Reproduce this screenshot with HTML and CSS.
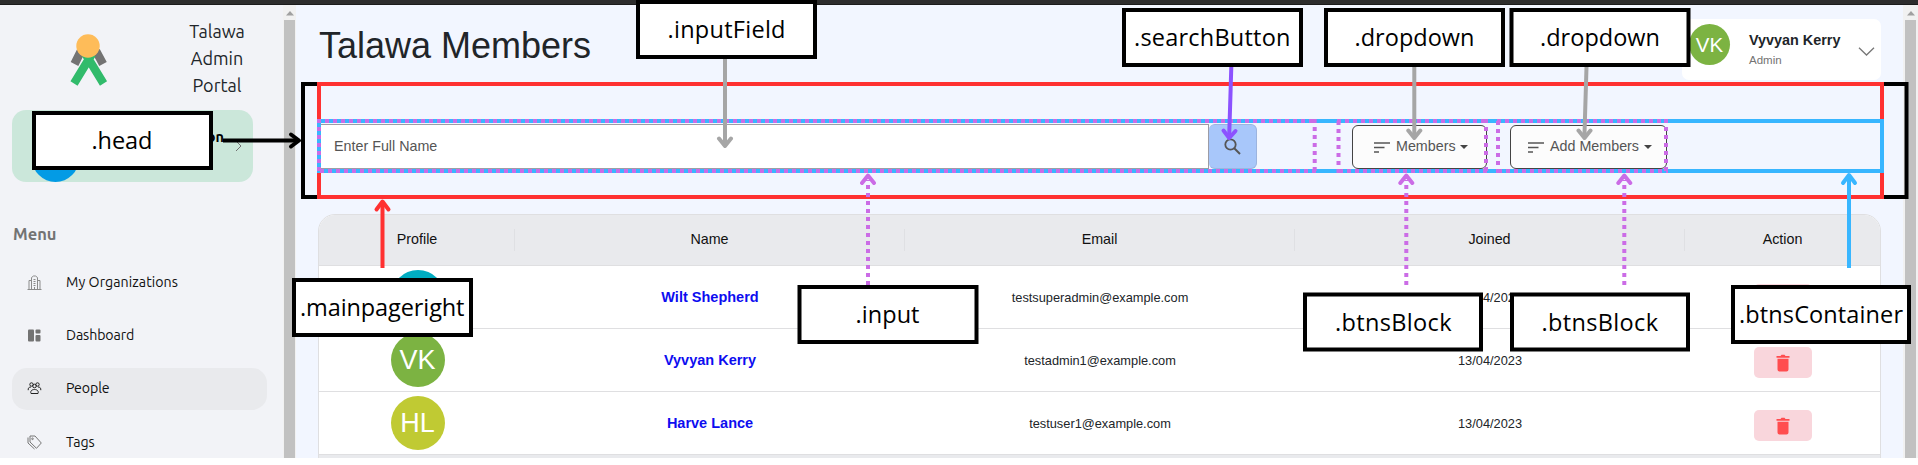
FILE: index.html
```html
<!DOCTYPE html>
<html lang="en">
<head>
<meta charset="utf-8">
<title>Talawa Members</title>
<link rel="stylesheet" href="styles.css">
</head>
<body>
<svg class="defs" width="0" height="0">
  <symbol id="sort" viewBox="0 0 18 12"><path d="M1 2h16M1 6.500h10.500M1 11h5" stroke="#555" stroke-width="1.700" fill="none"/></symbol>
  <symbol id="trash" viewBox="0 0 14 18"><path d="M.5 2h4L5.500.8h3L9.500 2h4v1.700H.5zM1.500 4.800h11V15.500a2 2 0 0 1-2 2h-7a2 2 0 0 1-2-2z" fill="#ff4d4f"/></symbol>
  <symbol id="scroll-up" viewBox="0 0 8 5"><path d="M0 4.500 4 0l4 4.500z" fill="#a0a0a0"/></symbol>
</svg>
<div class="topbar"></div>
<div class="app">
  <aside class="sidebar">
    <div class="brand">
      <svg class="logo" width="38" height="53" viewBox="0 0 38 53">
        <path d="M11 17 4.500 30M26 17l7 13" stroke="#737373" stroke-width="8.500"/>
        <path d="M4 49.500 22 20M33.500 49.500 15.500 20" stroke="#31bb6b" stroke-width="8.300"/>
        <circle cx="18" cy="12" r="11.700" fill="#febc59"/>
      </svg>
      <div class="brand-name">Talawa<br>Admin<br>Portal</div>
    </div>
    <div class="org">
      <span class="org-avatar"></span>
      <span class="org-name">on</span>
      <svg class="org-chevron" width="7" height="12" viewBox="0 0 7 12"><path d="m1 1 5 5-5 5" fill="none" stroke="#737373"/></svg>
    </div>
    <h5 class="menu-title">Menu</h5>
    <nav class="menu">
      <a class="item"><svg width="14" height="15" viewBox="0 0 14 15" fill="none" stroke="#8b8b8b"><path d="M0 14.500h14M1.500 14V5.500H4M12.500 14V5.500H10M4 14V2.500L6 1h2l2 1.500V14M6 4.500h2M6 6.500h2M6 8.500h2M6 10.500h2M7 12v2"/></svg><span class="w-org">My Organizations</span></a>
      <a class="item"><svg width="14" height="13" viewBox="0 0 14 13" fill="#737373"><rect x=".5" y=".5" width="6" height="12" rx="1"/><rect x="8" y=".5" width="5" height="4" rx="1"/><rect x="8" y="6" width="5" height="6.500" rx="1"/></svg><span>Dashboard</span></a>
      <a class="item active"><svg width="14" height="13" viewBox="0 0 14 13" fill="none" stroke="#222"><circle cx="7" cy="4" r="1.800"/><circle cx="4" cy="2.500" r="1.700"/><circle cx="10" cy="2.500" r="1.700"/><path d="M.7 8.200C.5 6 1.500 5 3.500 5M13.300 8.200C13.500 6 12.500 5 10.500 5M3.500 11.500c-1-2.500 1-4 3.500-4s4.500 1.500 3.500 4z"/></svg><span>People</span></a>
      <a class="item"><svg width="15" height="15" viewBox="0 0 15 15" fill="none" stroke="#777"><path d="M3 1h5l6.300 7-4.800 5.300L3 7zM1 2.500V8l6.500 6"/><circle cx="5.500" cy="3.800" r=".8"/></svg><span>Tags</span></a>
    </nav>
  </aside>
  <div class="scrollbar"><svg width="8" height="5"><use href="#scroll-up"/></svg><i></i></div>
  <main class="main">
    <header class="page-head">
      <h1>Talawa Members</h1>
      <div class="profile">
        <span class="avatar small vk">VK</span>
        <div class="who"><b>Vyvyan Kerry</b><span>Admin</span></div>
        <svg width="17" height="9" viewBox="0 0 17 9"><path d="m1 .7 7.500 7.300L16 .7" fill="none" stroke="#777" stroke-width="1.300"/></svg>
      </div>
    </header>
    <div class="controls">
      <div class="field">Enter Full Name</div>
      <div class="search"><svg width="17" height="17" viewBox="0 0 17 17"><circle cx="6.500" cy="6.500" r="5.200" fill="none" stroke="#555" stroke-width="1.800"/><path d="m10 10 6 6" stroke="#555" stroke-width="2"/></svg></div>
      <div class="drop members"><svg width="18" height="12"><use href="#sort"/></svg><span>Members</span><i class="caret"></i></div>
      <div class="drop add"><svg width="18" height="12"><use href="#sort"/></svg><span>Add Members</span><i class="caret"></i></div>
    </div>
    <section class="table">
      <div class="row thead"><div>Profile</div><div>Name</div><div>Email</div><div>Joined</div><div>Action</div></div>
      <div class="row"><div><span class="avatar ws"></span></div><div class="name">Wilt Shepherd</div><div>testsuperadmin@example.com</div><div>13/04/2023</div><div><span class="del"><svg width="14" height="18"><use href="#trash"/></svg></span></div></div>
      <div class="row"><div><span class="avatar vk">VK</span></div><div class="name">Vyvyan Kerry</div><div>testadmin1@example.com</div><div>13/04/2023</div><div><span class="del"><svg width="14" height="18"><use href="#trash"/></svg></span></div></div>
      <div class="row"><div><span class="avatar hl">HL</span></div><div class="name">Harve Lance</div><div>testuser1@example.com</div><div>13/04/2023</div><div><span class="del"><svg width="14" height="18"><use href="#trash"/></svg></span></div></div>
      <div class="tfoot"></div>
    </section>
  </main>
  <div class="scrollbar right"><svg width="8" height="5"><use href="#scroll-up"/></svg><i></i></div>
</div>
<svg class="notes" width="1918" height="465" viewBox="0 0 1918 465">
  <g class="frame">
    <rect class="black" x="303" y="84" width="1603.500" height="113"/>
    <rect class="red" x="319" y="84" width="1563" height="113"/>
    <rect class="blue" x="319" y="121" width="1563" height="50"/>
    <g class="violet dotted">
      <path d="M317 121H1317M320 171H1317M319 119V173M1314.700 119V173" />
      <path d="M1337 121H1488M1339 171H1488M1338.500 121V173M1486 119V173"/>
      <path d="M1497 121H1668M1498 171H1668M1498 121V173M1666 119V173"/>
    </g>
  </g>
  <g class="arrow">
    <path class="gray" d="M725 59V144M1414.300 67V137M1586.500 67 1584.400 137"/>
    <path class="gray tip" d="m719 138.500 6 7.500 6-7.500M1408.300 130.500l6 7.500 6-7.500M1578.500 130.500l6 7.500 6-7.500"/>
    <path class="purple" d="M1231.300 67 1229.200 136"/>
    <path class="purple tip" d="m1223.500 130.500 5.700 7.500 6.300-7"/>
    <path class="black" d="M223 140.500H297"/>
    <path class="black tip" d="m291 134.500 8 6-8 6"/>
    <path class="red" d="M382.500 268V204"/>
    <path class="red tip" d="m376.500 209.500 6-8 6 8"/>
    <path class="blue" d="M1849 268V177"/>
    <path class="blue tip" d="m1843 183 6-8 6 8"/>
    <path class="violet dotted" d="M868 285V180M1406.300 285V180M1624.300 285V180"/>
    <path class="violet tip" d="m862 183 6-7.500 6 7.500M1400.300 183l6-7.500 6 7.500M1618.300 183l6-7.500 6 7.500"/>
    <path class="violet fill" d="m863 181 5-7 5 7-5-3zM1401.300 181l5-7 5 7-5-3zM1619.300 181l5-7 5 7-5-3z"/>
  </g>
  <g class="box">
    <rect x="34" y="113" width="177" height="55"/>
    <rect x="638" y="2" width="177" height="55"/>
    <rect x="1124" y="10" width="177" height="55"/>
    <rect x="1326" y="10" width="177" height="55"/>
    <rect x="1511.500" y="10" width="177" height="55"/>
    <rect x="294" y="280" width="177" height="55"/>
    <rect x="799.500" y="287" width="177" height="55"/>
    <rect x="1305" y="294.500" width="176" height="55"/>
    <rect x="1512" y="294.500" width="176" height="55"/>
    <rect x="1733" y="287" width="176" height="55"/>
  </g>
  <g class="tag">
    <text x="91.500" y="149" textLength="61">.head</text>
    <text x="667.500" y="38" textLength="118">.inputField</text>
    <text x="1134" y="46" textLength="156.500">.searchButton</text>
    <text x="1354.500" y="46" textLength="120">.dropdown</text>
    <text x="1540" y="46" textLength="120">.dropdown</text>
    <text x="300" y="316" textLength="164.500">.mainpageright</text>
    <text x="855.500" y="323" textLength="64">.input</text>
    <text x="1335" y="331" textLength="116.500">.btnsBlock</text>
    <text x="1541.500" y="331" textLength="116.500">.btnsBlock</text>
    <text x="1739" y="323" textLength="164">.btnsContainer</text>
  </g>
</svg>
</body>
</html>
```
FILE: styles.css
```css
* { box-sizing: border-box; }
body {
  margin: 0;
  width: 1918px;
  height: 465px;
  overflow: hidden;
  position: relative;
  background: #fff;
  color: #212529;
  font-family: "Liberation Sans", Arial, sans-serif;
  font-size: 14.3px;
}
.defs { display: block; }
.topbar { height: 5px; background: #2d2d2d; border-bottom: 1px solid #1b1b1b; }
.app { display: flex; height: 453px; overflow: hidden; background: #f2f6ff; }

.sidebar {
  width: 283px;
  padding: 14px 16px 0 12px;
  background: #f2f3f7;
  font-family: Ubuntu, "Noto Sans", sans-serif;
}
.brand { display: flex; height: 91px; padding-left: 58px; }
.logo { flex-shrink: 0; margin-top: 15px; }
.brand-name { flex-shrink: 0; width: 120px; margin: -1px 0 0 49px; text-align: center; font-size: 18px; line-height: 27px; }
.org { display: flex; width: 241px; height: 72px; border-radius: 14px; background: #cbe7da; color: #000; }
.org > * { flex-shrink: 0; }
.org-avatar { width: 47px; height: 47px; margin: 25px 0 0 20px; border-radius: 50%; background: #039be5; }
.org-name { width: 45px; margin: 17px 0 0 100px; text-align: right; font-size: 14.5px; font-weight: 600; line-height: 20px; }
.org-chevron { margin: 30px 0 0 11px; }
.menu-title { margin: 40px 0 0 1px; color: #737373; font-size: 16.5px; line-height: 24px; }
.menu { display: flex; flex-direction: column; gap: 11px; margin-top: 15px; }
.item { display: flex; align-items: center; flex-shrink: 0; width: 255px; height: 42.300px; padding: 0 0 0 15px; border-radius: 15px; color: #111; font-size: 14.2px; }
.item svg { width: 15px; flex-shrink: 0; }
.item span { margin-left: 24px; margin-top: -1px; letter-spacing: -.1px; }
.item .w-org { letter-spacing: .05px; }
.item.active { background: #e9eaed; }

.scrollbar { display: flex; flex-direction: column; align-items: center; width: 13px; padding-top: 6px; background: #f1f1f1; }
.scrollbar svg { flex-shrink: 0; }
.scrollbar i { width: 11px; flex: 1; margin-top: 4px; background: #c1c1c1; }
.scrollbar.right { width: 15px; }

.main { width: 1607px; padding: 14px 22px 0; }
.page-head { display: flex; justify-content: space-between; height: 61px; }
h1 { margin: 5px 0 0 1px; font-size: 36px; font-weight: 400; line-height: 43px; }
.profile { display: flex; width: 199px; height: 61px; padding-left: 7px; border-radius: 7px; background: #fff; }
.avatar { display: flex; align-items: center; justify-content: center; width: 54px; height: 54px; padding-top: 1px; border-radius: 50%; color: #fff; font-size: 27px; }
.avatar.small { width: 41px; height: 41px; margin-top: 5px; font-size: 20.5px; }
.vk { background: #7cb342; }
.hl { background: #c0ca33; }
.ws { background: #00acc1; }
.who { display: flex; flex-direction: column; margin: 13px 0 0 19px; width: 109px; line-height: 17px; font-size: 14.4px; }
.who span { margin-top: 3px; font-size: 11.500px; color: #737373; }
.profile > svg { margin-top: 28px; }

.controls { display: flex; height: 45px; margin-top: 44px; padding-left: 1px; color: #555; }
.field { width: 890px; padding-left: 14px; border: 1px solid #9c9ca6; background: #fff; line-height: 43px; }
.search { display: flex; align-items: center; justify-content: center; width: 48px; border: 1px solid #9cb4df; border-left: 0; border-radius: 6px; background: #a8c7fa; }
.drop { display: flex; align-items: center; width: 135px; height: 44px; margin-top: 1px; padding: 0 0 0 20px; border: 1px solid #444; border-radius: 6px; background: #fcfcfc; white-space: nowrap; }
.drop.members { margin-left: 95px; }
.drop.add { width: 157px; margin-left: 23px; padding-left: 16px; }
.drop span { margin: -2px 0 0 5px; }
.drop.members span { width: 60px; }
.drop.add span { width: 90px; }
.caret { margin: 0 0 1px 4px; border: 4px solid transparent; border-top-color: #444; border-bottom: 0; }

.table { width: 1563px; margin-top: 45px; border: 1px solid #dfdfe1; border-radius: 17px 17px 0 0; background: #fff; overflow: hidden; }
.row { display: grid; grid-template-columns: 1fr 2fr 2fr 2fr 1fr; align-items: center; height: 63px; padding-left: 1px; border-bottom: 1px solid #dfdfe1; font-size: 12.8px; }
.row > div { display: flex; justify-content: center; align-items: center; }
.thead { height: 51px; background: #e9eaed; color: #111; font-size: 14.300px; }
.thead > div { height: 22px; padding-bottom: 3px; border-right: 1px solid #dfe0e3; }
.thead > div:last-child { border: 0; }
.row > .name { color: #0d0df0; font-size: 14.500px; font-weight: 700; }
.del { display: flex; align-items: center; justify-content: center; width: 58px; height: 31px; margin: 5px 0 0 1px; border-radius: 5px; background: #f9d6dc; }
.tfoot { height: 20px; background: #e9eaed; }

.notes { position: absolute; left: 0; top: 0; }
.frame, .arrow { fill: none; stroke-width: 4; }
.tip { stroke-linecap: round; stroke-linejoin: round; }
.black { stroke: #000; }
.red { stroke: #ff3131; }
.blue { stroke: #38b6ff; }
.gray { stroke: #a6a6a6; }
.purple { stroke: #8c52ff; }
.violet { stroke: #cb6ce6; }
.fill { fill: #cb6ce6; stroke: none; }
.dotted { stroke-dasharray: 4; }
.box rect { fill: #fff; stroke: #000; stroke-width: 4; }
.tag { fill: #000; font-family: "Open Sans", "Noto Sans", sans-serif; font-size: 23.500px; }
```
